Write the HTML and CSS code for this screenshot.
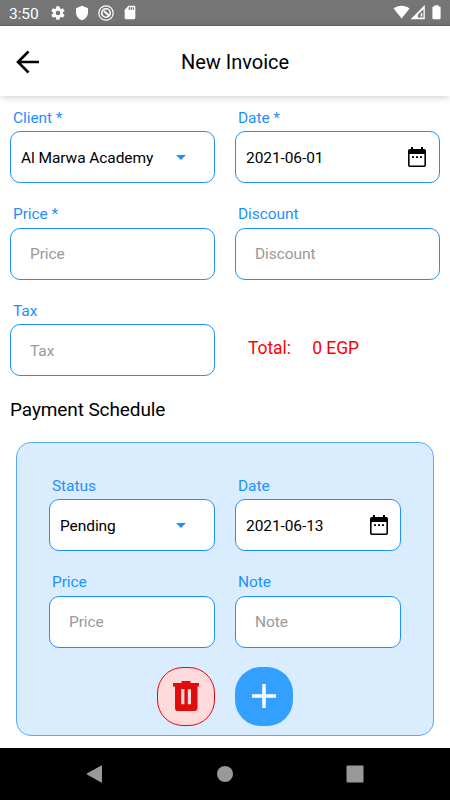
FILE: index.html
```html
<!DOCTYPE html>
<html lang="en">
<head>
<meta charset="utf-8">
<title>New Invoice</title>
<link rel="stylesheet" href="styles.css">
</head>
<body>
<div class="status-bar">
  <span class="clock">3:50</span>
  <svg class="sys-icon gear" viewBox="0 0 24 24"><path d="M19.4 13c0-.3.1-.6.1-1s0-.7-.1-1l2.1-1.6c.2-.2.3-.4.1-.7l-2-3.4c-.1-.2-.4-.3-.6-.2l-2.5 1c-.5-.4-1.1-.7-1.7-1l-.4-2.600c0-.3-.2-.5-.5-.5h-4c-.3 0-.5.2-.5.5L9 5.100c-.6.3-1.100.6-1.700 1l-2.500-1c-.2-.1-.5 0-.6.2l-2 3.400c-.1.3 0 .5.1.7L4.500 11c0 .3-.1.6-.1 1s0 .7.1 1l-2.200 1.600c-.1.2-.2.5-.1.7l2 3.400c.1.2.4.3.6.2l2.500-1c.5.4 1.100.7 1.700 1l.4 2.600c0 .3.2.5.5.5h4c.3 0 .5-.2.5-.5l.4-2.600c.6-.3 1.200-.6 1.700-1l2.500 1c.2.1.5 0 .6-.2l2-3.400c.2-.3.1-.5-.1-.7zM12 15.500a3.500 3.500 0 1 1 0-7 3.500 3.500 0 0 1 0 7z"/></svg>
  <svg class="sys-icon shield" viewBox="0 0 24 24"><path d="M12 1 3 5v6c0 5.500 3.800 10.700 9 12 5.200-1.300 9-6.500 9-12V5z"/></svg>
  <svg class="sys-icon blocked" viewBox="0 0 24 24"><g fill="none" stroke="#fff"><circle cx="12" cy="12" r="10.800" stroke-width="1.800"/><circle cx="12" cy="12" r="6.400" stroke-width="2.400"/><path d="m9 9 8 7.500" stroke-width="2.600"/></g></svg>
  <svg class="sys-icon card" viewBox="0 0 24 24"><path d="M18 2h-8L4 8v12c0 1.100.9 2 2 2h12c1.100 0 2-.9 2-2V4c0-1.100-.9-2-2-2zm-6 6h-2V4h2zm3 0h-2V4h2zm3 0h-2V4h2z"/></svg>
  <svg class="radio-icons" viewBox="0 0 50 16"><path d="M.6 3.500C5.300-.2 11.800-.2 16.600 3.500L8.600 13.600z"/><path fill-rule="evenodd" d="M31.800 0v14.200H17.600zM30.500 4.200V12.600H24.800V9.800z"/><path d="M29.300 7.500v4.100h-1.600V9z"/><path d="M41.500 1.500V.3h4v1.200h1.100q1 0 1 1v10.800q0 1-1 1h-6.200q-1 0-1-1V2.500q0-1 1-1z"/></svg>
</div>
<header class="app-bar">
  <svg class="back" viewBox="0 0 24 24"><path d="M23 12H2M12.500 1.500 2 12l10.500 10.500"/></svg>
  <h1>New Invoice</h1>
</header>
<main>
  <form class="grid">
    <div class="field"><label>Client *</label><div class="box select"><span>Al Marwa Academy</span><i class="caret"></i></div></div>
    <div class="field"><label>Date *</label><div class="box"><span>2021-06-01</span><svg class="calendar" viewBox="0 0 18 20"><path fill-rule="evenodd" d="M3 0h2v2h8V0h2v2h1.200Q18 2 18 3.800v14.400Q18 20 16.200 20H1.800Q0 20 0 18.200V3.800Q0 2 1.800 2H3zM1.600 7v11.400h14.800V7z"/><path d="M4 9.200h2v1.800H4zm4 0h2v1.800H8zm4 0h2v1.800h-2z"/></svg></div></div>
    <div class="field"><label>Price *</label><div class="box hint"><span>Price</span></div></div>
    <div class="field"><label>Discount</label><div class="box hint"><span>Discount</span></div></div>
    <div class="field"><label>Tax</label><div class="box hint"><span>Tax</span></div></div>
    <div class="total"><span>Total:</span><span>0 EGP</span></div>
  </form>
  <h2>Payment Schedule</h2>
  <section class="schedule">
    <div class="grid">
      <div class="field"><label>Status</label><div class="box select"><span>Pending</span><i class="caret"></i></div></div>
      <div class="field"><label>Date</label><div class="box"><span>2021-06-13</span><svg class="calendar" viewBox="0 0 18 20"><path fill-rule="evenodd" d="M3 0h2v2h8V0h2v2h1.200Q18 2 18 3.800v14.400Q18 20 16.200 20H1.800Q0 20 0 18.200V3.800Q0 2 1.800 2H3zM1.600 7v11.400h14.800V7z"/><path d="M4 9.200h2v1.800H4zm4 0h2v1.800H8zm4 0h2v1.800h-2z"/></svg></div></div>
      <div class="field"><label>Price</label><div class="box hint"><span>Price</span></div></div>
      <div class="field"><label>Note</label><div class="box hint"><span>Note</span></div></div>
    </div>
    <div class="actions">
      <div class="round delete"><svg viewBox="0 0 26 30"><path fill-rule="evenodd" d="M8.500 0h9v2H26v3.400h-1.500V27q0 3-3 3h-17q-2.500 0-2.500-3V5.400H0V2h8.500zM8.200 8.200v15h3.200v-15zm6.600 0v15H18v-15z"/></svg></div>
      <div class="round add"><svg viewBox="0 0 24 24"><path d="M12 0v24M0 12h24"/></svg></div>
    </div>
  </section>
</main>
<nav class="nav-bar">
  <svg viewBox="0 0 18 18"><path d="M1.300 8.300 15.300.4q.7-.3.700.4v16.400q0 .7-.7.400L1.300 9.700q-1.200-.7 0-1.400z"/></svg>
  <svg viewBox="0 0 18 18"><circle cx="9" cy="9" r="8"/></svg>
  <svg viewBox="0 0 18 18"><rect x=".5" y=".5" width="17" height="17" rx="1"/></svg>
</nav>
</body>
</html>
```

FILE: styles.css
```css
* { box-sizing: border-box; }
body {
  margin: 0;
  width: 450px;
  height: 800px;
  display: flex;
  flex-direction: column;
  overflow: hidden;
  background: #fff;
  color: #000;
  font: 400 15.5px/20px Roboto, sans-serif;
  letter-spacing: -.08px;
}
h1, h2 { margin: 0; font-weight: 400; }
svg { display: block; flex: none; }

.status-bar {
  flex: none;
  height: 26px;
  display: flex;
  align-items: center;
  padding: 0 7px 0 9px;
  background: #757575;
  border-bottom: 1px solid #686868;
  color: #fff;
  fill: #fff;
}
.clock { width: 41px; padding-top: 2px; }
.sys-icon { width: 16px; height: 16px; margin-right: 8px; }
.card { width: 16px; height: 17px; }
.radio-icons { width: 50px; height: 16px; margin-left: auto; }

.app-bar {
  flex: none;
  height: 70px;
  position: relative;
  z-index: 1;
  display: grid;
  grid-template-columns: 40px 1fr 20px;
  align-items: center;
  background: #fff;
  box-shadow: 0 1px 8px rgba(0, 0, 0, .2);
}
.back { width: 24px; height: 24px; margin-left: 15.500px; margin-top: 1px; fill: none; stroke: #000; stroke-width: 2.6; }
h1 { font-size: 20px; line-height: 24px; text-align: center; padding-top: 2px; letter-spacing: 0; }

main { flex: 1; padding: 11.500px 10px 0; }
.grid { display: grid; grid-template-columns: 1fr 1fr; gap: 21px 20px; }
.field { display: flex; flex-direction: column; gap: 3.500px; }
label { padding-left: 3px; color: #1e90ff; }
.box {
  height: 52px;
  display: flex;
  align-items: center;
  justify-content: space-between;
  padding: 1px 13px 0 10px;
  background: #fff;
  border: 1px solid #1e90ff;
  border-radius: 10px;
}
.select { padding-right: 28px; }
.hint { padding-left: 19px; color: #999; }
.caret { border: 5.500px solid transparent; border-top-color: #1e90ff; border-bottom: 0; }
.calendar { width: 18px; height: 20px; margin-top: -2px; }
.schedule .calendar { margin-right: -1px; }
.total { display: flex; gap: 21.500px; padding: 37.500px 0 0 13px; color: #f00; font-size: 17.500px; }
h2 { margin-top: 21.500px; font-size: 19px; line-height: 24px; letter-spacing: -.1px; }

.schedule {
  margin: 20px 6px 0;
  height: 294px;
  padding: 33px 32px 0;
  background: #daedff;
  border: 1px solid #55aaff;
  border-radius: 15px;
}
.actions { display: flex; justify-content: center; gap: 20px; margin-top: 19.500px; }
.round { width: 58px; height: 58.500px; border-radius: 26px; display: flex; align-items: center; justify-content: center; }
.delete { background: #ffdada; border: 1px solid #e00b0b; fill: #e00b0b; }
.delete svg { width: 26px; height: 30px; }
.add { background: #339fff; }
.add svg { width: 24px; height: 24px; stroke: #fff; stroke-width: 3.500; }

.nav-bar {
  flex: none;
  height: 52.500px;
  display: flex;
  align-items: center;
  justify-content: space-between;
  padding: 0 86px;
  background: #000;
  fill: #999;
}
.nav-bar svg { width: 18px; height: 18px; }
```
